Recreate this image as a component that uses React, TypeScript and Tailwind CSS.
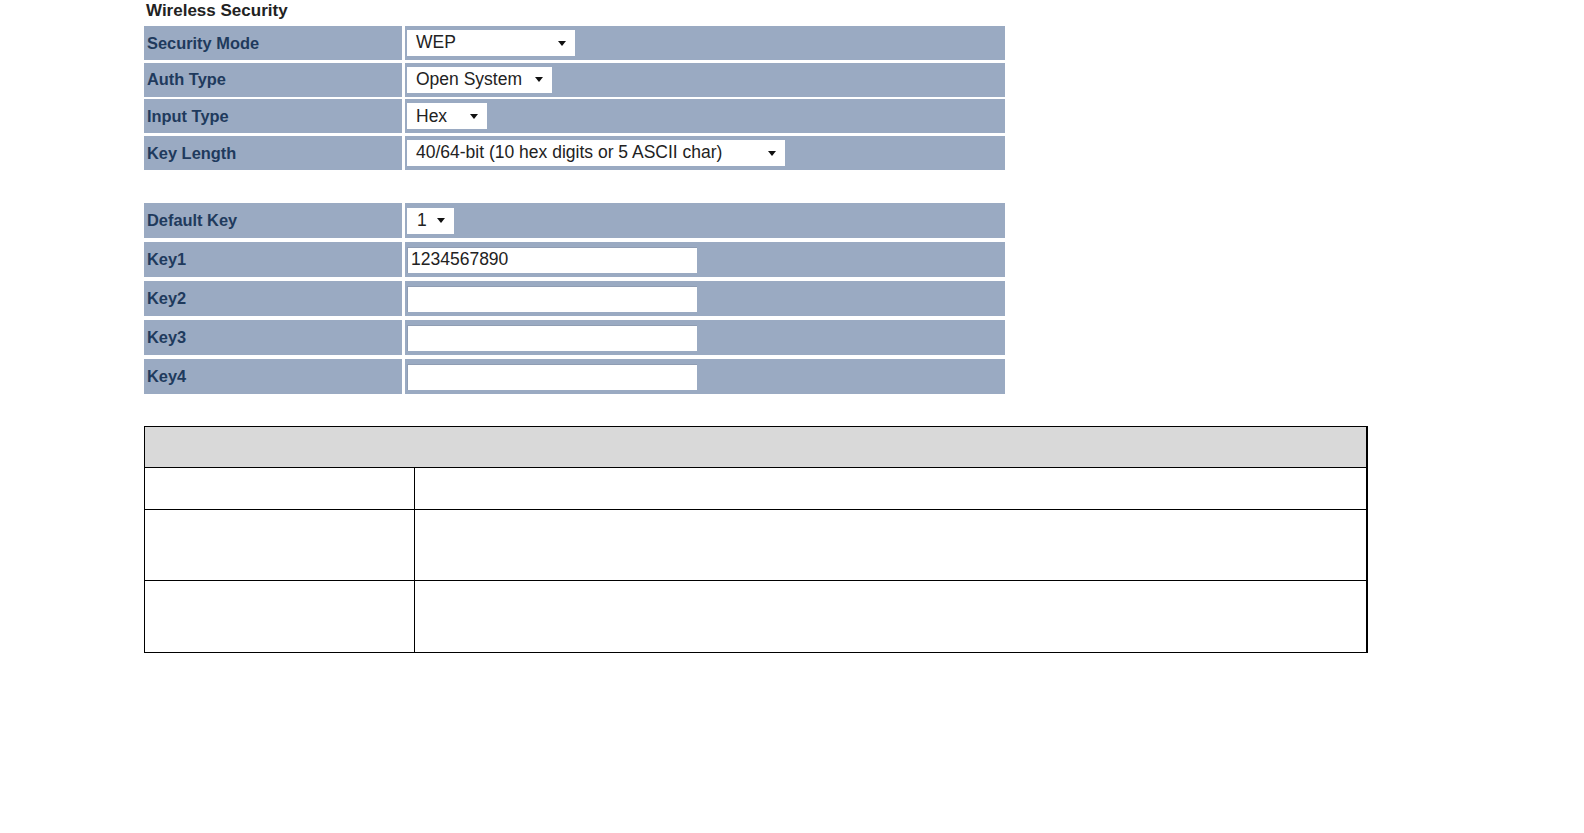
import React from 'react';

const ROW_BG = 'bg-[#9aaac2]';

function Arrow() {
  return (
    <svg width="8" height="5" viewBox="0 0 8 5" className="shrink-0">
      <path d="M0 0 L8 0 L4 5 Z" fill="#111" />
    </svg>
  );
}

function FakeSelect({ value, width }: { value: string; width: string }) {
  return (
    <div className={`flex h-[26px] items-center justify-between bg-white pl-[9px] pr-[9px] text-[17.5px] text-[#222] ${width}`}>
      <span className="leading-none">{value}</span>
      <Arrow />
    </div>
  );
}

function FakeInput({ value }: { value?: string }) {
  return (
    <div className="flex h-[26px] w-[290px] items-center border-t border-l border-[#8f9db3] bg-white pl-[3px] text-[17.5px] text-[#222]">
      <span className="leading-none">{value}</span>
    </div>
  );
}

function Row({ label, h, children }: { label: string; h: string; children?: React.ReactNode }) {
  return (
    <div className={`flex gap-[3px] ${h}`}>
      <div className={`flex w-[258px] items-center pl-[3px] text-[16.4px] font-bold text-[#1f3a5d] ${ROW_BG}`}>
        {label}
      </div>
      <div className={`flex flex-1 items-center pl-[2px] ${ROW_BG}`}>{children}</div>
    </div>
  );
}

export default function App() {
  return (
    <div className="min-h-[833px] bg-white pl-[144px]" style={{ fontFamily: '"Liberation Sans", Arial, sans-serif' }}>
      <div className="w-[861px]">
        <h1 className="h-[20px] pl-[2px] pt-[1px] text-[17px] font-bold leading-[20px] text-[#222]">Wireless Security</h1>

        <div className="mt-[6px] flex flex-col gap-[2.7px]">
          <Row label="Security Mode" h="h-[34px]">
            <FakeSelect value="WEP" width="w-[168px]" />
          </Row>
          <Row label="Auth Type" h="h-[34px]">
            <FakeSelect value="Open System" width="w-[145px]" />
          </Row>
          <Row label="Input Type" h="h-[34px]">
            <FakeSelect value="Hex" width="w-[80px]" />
          </Row>
          <Row label="Key Length" h="h-[34px]">
            <FakeSelect value="40/64-bit (10 hex digits or 5 ASCII char)" width="w-[378px]" />
          </Row>
        </div>

        <div className="mt-[33px] flex flex-col gap-[4px]">
          <Row label="Default Key" h="h-[35px]">
            <FakeSelect value="1" width="w-[47px] !pl-[10px]" />
          </Row>
          <Row label="Key1" h="h-[35px]">
            <FakeInput value="1234567890" />
          </Row>
          <Row label="Key2" h="h-[35px]">
            <FakeInput />
          </Row>
          <Row label="Key3" h="h-[35px]">
            <FakeInput />
          </Row>
          <Row label="Key4" h="h-[35px]">
            <FakeInput />
          </Row>
        </div>
      </div>

      <div className="mt-[32px] w-[1224px] border-[1.5px] border-r-2 border-black">
        <div className="h-[41px] border-b-[1.5px] border-black bg-[#d9d9d9]" />
        <div className="flex h-[42px] border-b-[1.5px] border-black">
          <div className="w-[270px] border-r-[1.5px] border-black" />
          <div className="flex-1" />
        </div>
        <div className="flex h-[71px] border-b-[1.5px] border-black">
          <div className="w-[270px] border-r-[1.5px] border-black" />
          <div className="flex-1" />
        </div>
        <div className="flex h-[71px]">
          <div className="w-[270px] border-r-[1.5px] border-black" />
          <div className="flex-1" />
        </div>
      </div>
    </div>
  );
}
